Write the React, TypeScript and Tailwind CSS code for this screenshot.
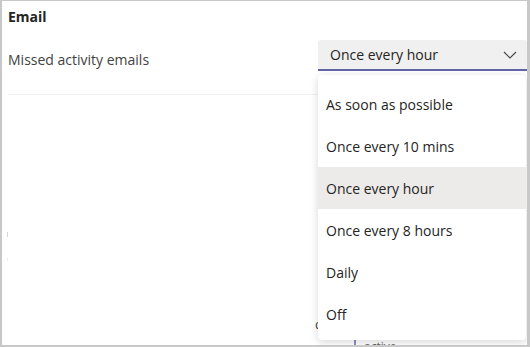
import React from "react";

const options = [
  "As soon as possible",
  "Once every 10 mins",
  "Once every hour",
  "Once every 8 hours",
  "Daily",
  "Off",
];

export default function App() {
  return (
    <div
      className="relative w-[530px] h-[347px] overflow-hidden bg-[#c8c8c8] pl-[2px] pt-[1px] pr-[3px] pb-[2px]"
      style={{ fontFamily: '"Open Sans", "Noto Sans", sans-serif' }}
    >
      <div className="relative h-full w-full bg-white overflow-hidden flex flex-col">
        <div className="pl-[6px] pt-[6px]">
          <div className="text-[14px] font-bold text-[#252423] leading-[20px]">Email</div>
          <div className="mt-[13px] flex items-start justify-between h-[31px]">
            <div className="text-[14px] text-[#424242] leading-[20px] pt-[10px]">Missed activity emails</div>
            <div className="w-[209px] h-[31px] bg-[#f0f0f0] border-b-2 border-[#6264a7] rounded-t-[3px] flex items-center justify-between pl-[12px] pr-[10px]">
              <span className="text-[14px] text-[#252423] leading-[20px]">Once every hour</span>
              <svg width="14" height="8" viewBox="0 0 14 8" fill="none">
                <path d="M1 1 L7 7 L13 1" stroke="#484644" strokeWidth="1.1" />
              </svg>
            </div>
          </div>
          <div className="mt-[23px] h-px bg-[#f0f0f0] w-[310px]" />
        </div>

        {/* faint background content */}
        <div className="flex-1 flex flex-col pl-[5px] pt-[137px]">
          <div className="w-px h-[5px] bg-[#d6d6d6]" />
          <div className="mt-[21px] w-px h-[3px] bg-[#ececec]" />
          <div className="mt-auto flex items-end pl-[308px] gap-[31px]">
            <div className="text-[13px] text-[#424242] leading-none pb-[14px]">d</div>
            <div className="w-[172px] h-[12px] border-l-2 border-[#8b8cc7] bg-white pl-[8px] text-[12px] text-[#616161] leading-none pt-[8px] overflow-hidden">
              active
            </div>
          </div>
        </div>

        {/* dropdown menu */}
        <div className="absolute left-[316px] top-[74px] w-[208px] bg-white rounded-[4px] shadow-[0_2px_8px_rgba(0,0,0,0.16)] pt-[8px] pb-[5px]">
          {options.map((o) => (
            <div
              key={o}
              className={
                "h-[42px] flex items-center pl-[8px] text-[14px] text-[#252423] " +
                (o === "Once every hour" ? "bg-[#edebe9]" : "")
              }
            >
              {o}
            </div>
          ))}
        </div>
      </div>
    </div>
  );
}
